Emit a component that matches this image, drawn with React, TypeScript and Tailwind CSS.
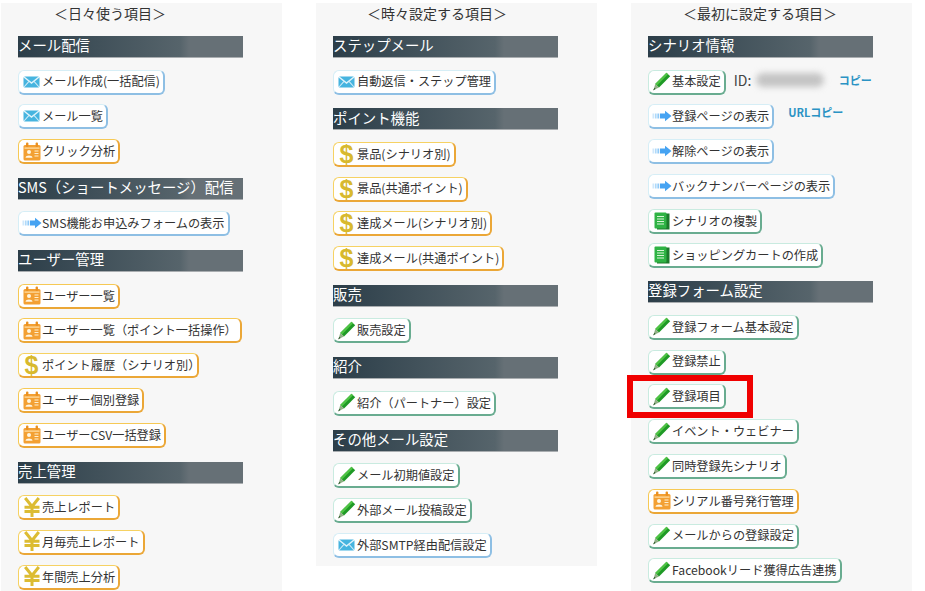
import React from "react";

type Kind = "mail" | "card" | "dollar" | "yen" | "pen" | "arrow" | "doc";

const MailIcon = () => (
  <svg width="17" height="12" viewBox="0 0 17 12" className="shrink-0">
    <rect x="0.5" y="0.5" width="16" height="11" rx="1.5" fill="#46b4df" />
    <path d="M1 1 L8.5 7 L16 1" fill="none" stroke="#dff3fb" strokeWidth="1.5" />
    <path d="M1 11 L6 5.4 M16 11 L11 5.4" fill="none" stroke="#cdeaf7" strokeWidth="1.1" />
  </svg>
);
const CardIcon = () => (
  <svg width="18" height="19" viewBox="0 0 18 19" className="shrink-0">
    <rect x="0.5" y="3" width="17" height="15.5" rx="1.5" fill="#f3a033" />
    <rect x="3" y="0.5" width="2.4" height="4.5" rx="1" fill="#ea9020" />
    <rect x="12.6" y="0.5" width="2.4" height="4.5" rx="1" fill="#ea9020" />
    <rect x="1.5" y="5.5" width="15" height="1.2" fill="#ffe0a8" />
    <circle cx="6" cy="10" r="2" fill="#fff6e2" />
    <path d="M2.5 15.8 C2.5 12.6 9.5 12.6 9.5 15.8 Z" fill="#fff6e2" />
    <path d="M11.5 9 H15.5 M11.5 11.5 H15.5 M11.5 14 H15.5" stroke="#fff0d0" strokeWidth="1.2" />
  </svg>
);
const PenIcon = () => (
  <svg width="19" height="19" viewBox="0 0 19 19" className="shrink-0">
    <path d="M14.5 0.8 L18.2 4.2 L7 15.6 L3.2 12 Z" fill="#1f9a26" />
    <path d="M14.5 0.8 L16 2.2 L5 13.6 L3.2 12 Z" fill="#4fc444" />
    <path d="M3.2 12 L7 15.6 L1.6 18 Z" fill="#8faf84" />
    <path d="M2.4 15.8 L3.6 17 L1 18.4 Z" fill="#2e5a2c" />
  </svg>
);
const ArrowIcon = () => (
  <svg width="20" height="12" viewBox="0 0 20 12" className="shrink-0">
    <path d="M0.5 3.5 H2 V8.5 H0.5 Z" fill="#cfe8fc" />
    <path d="M2.8 3.5 H4.6 V8.5 H2.8 Z" fill="#b0d9f9" />
    <path d="M5.4 3.5 H7.2 V8.5 H5.4 Z" fill="#90caf8" />
    <path d="M8 3.5 H13 V0.8 L19.5 6 L13 11.2 V8.5 H8 Z" fill="#46a3f2" />
  </svg>
);
const DocIcon = () => (
  <svg width="16" height="18" viewBox="0 0 16 18" className="shrink-0">
    <rect x="3" y="1.5" width="12.5" height="16" fill="#1c7a2b" />
    <rect x="0.5" y="0.5" width="12" height="16" rx="1" fill="#2fb344" />
    <path d="M3 4.5 H10 M3 7 H10 M3 9.5 H10 M3 12 H10" stroke="#d8f5d5" strokeWidth="1.2" />
  </svg>
);
const YenIcon = () => (
  <svg width="18" height="21" viewBox="0 0 18 21" className="shrink-0">
    <path d="M2.2 1 L9 9.5 L15.8 1 M9 9.5 V20 M1.5 10.2 H16.5 M1.5 14.6 H16.5" fill="none" stroke="#dcbc33" strokeWidth="3" />
  </svg>
);
const DollarIcon = () => (
  <span className="w-[18px] shrink-0 text-center font-['Liberation_Sans',sans-serif] text-[25px] font-bold leading-[22px] text-[#d8b92e]">
    $
  </span>
);

const icons: Record<Kind, React.ReactNode> = {
  mail: <MailIcon />,
  card: <CardIcon />,
  dollar: <DollarIcon />,
  yen: <YenIcon />,
  pen: <PenIcon />,
  arrow: <ArrowIcon />,
  doc: <DocIcon />,
};

const borders: Record<Kind, string> = {
  mail: "border-[#d6eef6] border-r-[#8ebfe4] border-b-[#8ebfe4]",
  arrow: "border-[#d6eef6] border-r-[#8ebfe4] border-b-[#8ebfe4]",
  card: "border-[#f6c955] border-r-[#eba737] border-b-[#eba737]",
  dollar: "border-[#f6d263] border-r-[#eba737] border-b-[#eba737]",
  yen: "border-[#f6d263] border-r-[#eba737] border-b-[#eba737]",
  pen: "border-[#c9ebe0] border-r-[#69ac90] border-b-[#69ac90]",
  doc: "border-[#c9ebe0] border-r-[#69ac90] border-b-[#69ac90]",
};

function Btn({ kind, label }: { kind: Kind; label: string }) {
  const tight = label === "ポイント履歴（シナリオ別）";
  return (
    <div
      className={`inline-flex h-[25px] items-center rounded-[6px] border border-r-2 border-b-2 bg-white pl-[2px] pr-[3px] text-[12.2px] whitespace-nowrap text-[#333] ${borders[kind]}`}
    >
      <span className="flex w-[21px] shrink-0 justify-center">{icons[kind]}</span>
      <span className={tight ? "-mr-[6px]" : ""}>{label}</span>
    </div>
  );
}

const Head = ({ children }: { children: string }) => (
  <div className="mb-[11.5px] flex h-[22px] w-[225px] items-center whitespace-nowrap border-b border-[#a9adb0] bg-[linear-gradient(90deg,#2c3e49_0%,#56646b_72%,#667076_76%,#667076_100%)] pb-[3px] text-[14.4px] text-white">
    {children}
  </div>
);

const Row = ({ children }: { children: React.ReactNode }) => (
  <div className="flex h-[34.8px] items-start">{children}</div>
);

type Section = { head: string; items: [Kind, string][] };

const col1: Section[] = [
  { head: "メール配信", items: [["mail", "メール作成(一括配信)"], ["mail", "メール一覧"], ["card", "クリック分析"]] },
  { head: "SMS（ショートメッセージ）配信", items: [["arrow", "SMS機能お申込みフォームの表示"]] },
  {
    head: "ユーザー管理",
    items: [
      ["card", "ユーザー一覧"],
      ["card", "ユーザー一覧（ポイント一括操作）"],
      ["dollar", "ポイント履歴（シナリオ別）"],
      ["card", "ユーザー個別登録"],
      ["card", "ユーザーCSV一括登録"],
    ],
  },
  { head: "売上管理", items: [["yen", "売上レポート"], ["yen", "月毎売上レポート"], ["yen", "年間売上分析"]] },
];

const col2: Section[] = [
  { head: "ステップメール", items: [["mail", "自動返信・ステップ管理"]] },
  {
    head: "ポイント機能",
    items: [
      ["dollar", "景品(シナリオ別)"],
      ["dollar", "景品(共通ポイント)"],
      ["dollar", "達成メール(シナリオ別)"],
      ["dollar", "達成メール(共通ポイント)"],
    ],
  },
  { head: "販売", items: [["pen", "販売設定"]] },
  { head: "紹介", items: [["pen", "紹介（パートナー）設定"]] },
  {
    head: "その他メール設定",
    items: [["pen", "メール初期値設定"], ["pen", "外部メール投稿設定"], ["mail", "外部SMTP経由配信設定"]],
  },
];

const col3b: [Kind, string][] = [
  ["arrow", "解除ページの表示"],
  ["arrow", "バックナンバーページの表示"],
  ["doc", "シナリオの複製"],
  ["doc", "ショッピングカートの作成"],
];

const col3c: [Kind, string][] = [
  ["pen", "登録フォーム基本設定"],
  ["pen", "登録禁止"],
  ["pen", "登録項目"],
  ["pen", "イベント・ウェビナー"],
  ["pen", "同時登録先シナリオ"],
  ["card", "シリアル番号発行管理"],
  ["pen", "メールからの登録設定"],
  ["pen", "Facebookリード獲得広告連携"],
];

const Panel = ({ title, indent, cls, children }: { title: string; indent: string; cls: string; children: React.ReactNode }) => (
  <div className={`relative w-[281px] shrink-0 bg-[#f7f7f7] pl-[17px] ${cls}`}>
    <div className={`flex h-[33px] items-center pb-[12px] text-[14px] whitespace-nowrap text-[#333] ${indent}`}>{title}</div>
    {children}
  </div>
);

const Sec = ({ s }: { s: Section }) => (
  <div className="mb-[4px]">
    <Head>{s.head}</Head>
    {s.items.map(([k, l]) => (
      <Row key={l}>
        <Btn kind={k} label={l} />
      </Row>
    ))}
  </div>
);

const copy = "text-[11px] font-bold text-[#2b93c4]";

export default function App() {
  return (
    <div className="h-[591px] w-[925px] overflow-hidden bg-white font-['Noto_Sans_CJK_JP','Noto_Sans',sans-serif]">
      <div className="flex items-start gap-[34px] pl-[1px] pt-[3px]">
        <Panel title="＜日々使う項目＞" indent="pl-[36px]" cls="h-[588px]">
          {col1.map((s) => (
            <Sec key={s.head} s={s} />
          ))}
        </Panel>
        <Panel title="＜時々設定する項目＞" indent="pl-[34px]" cls="h-[563px]">
          {col2.map((s) => (
            <Sec key={s.head} s={s} />
          ))}
        </Panel>
        <Panel title="＜最初に設定する項目＞" indent="pl-[35px]" cls="h-[588px]">
          <div className="mb-[3px]">
            <Head>シナリオ情報</Head>
            <Row>
              <Btn kind="pen" label="基本設定" />
              <div className="ml-[8px] flex h-[22px] items-center text-[14px] text-[#444]">
                <span className="relative w-[105px] whitespace-nowrap">
                  ID:
                  <span className="absolute left-[22px] top-[3px] h-[14px] w-[68px] rounded-full bg-[#c4c4c4] blur-[3px]" />
                </span>
                <span className={copy}>コピー</span>
              </div>
            </Row>
            <Row>
              <Btn kind="arrow" label="登録ページの表示" />
              <span className={`ml-[14px] ${copy}`}>URLコピー</span>
            </Row>
            {col3b.map(([k, l]) => (
              <Row key={l}>
                <Btn kind={k} label={l} />
              </Row>
            ))}
          </div>
          <div>
            <Head>登録フォーム設定</Head>
            {col3c.map(([k, l]) => (
              <Row key={l}>
                <Btn kind={k} label={l} />
              </Row>
            ))}
          </div>
          <div className="absolute left-[-4px] top-[372px] h-[43px] w-[126px] border-[6px] border-[#f00000]" />
        </Panel>
      </div>
    </div>
  );
}
